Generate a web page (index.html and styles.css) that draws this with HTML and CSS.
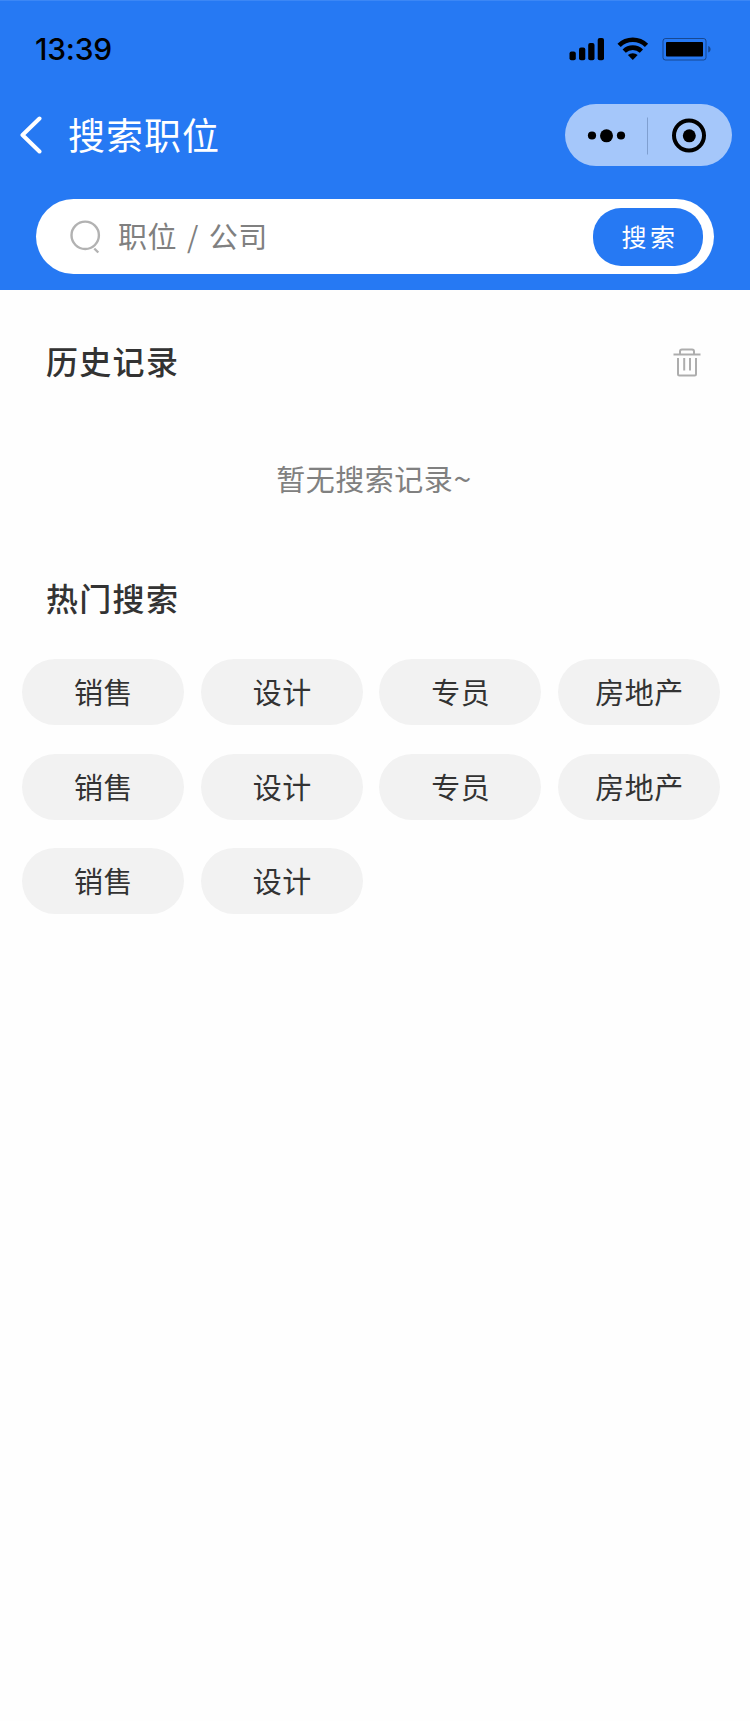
FILE: index.html
```html
<!DOCTYPE html>
<html lang="zh-CN">
<head>
<meta charset="utf-8">
<title>搜索职位</title>
<link rel="stylesheet" href="styles.css">
</head>
<body>
<header class="header">
  <div class="status">
    <span class="time">13:39</span>
    <svg class="status-icons" width="142" height="24" viewBox="0 0 142 24">
      <rect x="-.5" y="14.500" width="6.300" height="8.700" rx="2"/>
      <rect x="9" y="10.500" width="6.300" height="12.700" rx="2"/>
      <rect x="18.200" y="6" width="6.300" height="17.200" rx="2"/>
      <rect x="27.700" y="1" width="6.300" height="22.200" rx="2"/>
      <g fill="none" stroke="#000" stroke-width="4.600">
        <path d="M49.100 8.300a19.500 19.500 0 0 1 27.400 0"/>
        <path d="M54.200 14.100a12.300 12.300 0 0 1 17.200 0"/>
      </g>
      <path d="M62.800 23l-4.900-4.900a7.200 7.200 0 0 1 9.800 0z"/>
      <rect x="93" y="1.500" width="43" height="21.500" rx="2.500" fill="none" stroke="#000" stroke-opacity=".4"/>
      <rect x="96" y="5" width="37" height="14.500" rx="1"/>
      <path d="M138.200 9c3.200.8 3.200 5.700 0 6.500z" fill-opacity=".4"/>
    </svg>
  </div>
  <div class="nav">
    <svg class="back" width="24" height="38" viewBox="0 0 24 38"><path d="M21.500 2.500L4.500 19l17 16.500" fill="none" stroke="#fff" stroke-width="4" stroke-linecap="round" stroke-linejoin="round"/></svg>
    <h1 class="title">搜索职位</h1>
    <div class="capsule">
      <svg width="167" height="62" viewBox="0 0 167 62">
        <circle cx="27" cy="31.500" r="4.100"/><circle cx="41.500" cy="31.800" r="6.500"/><circle cx="56" cy="31.500" r="4.100"/>
        <path d="M82.500 13.500v37" stroke="#7f9fd0"/>
        <circle cx="124" cy="31.500" r="15" fill="none" stroke="#000" stroke-width="4"/><circle cx="124.300" cy="31.800" r="6.500"/>
      </svg>
    </div>
  </div>
  <div class="search">
    <svg class="lens" width="32" height="36" viewBox="0 0 32 36"><g fill="none" stroke="#b2b2b2" stroke-width="2.400"><circle cx="15.200" cy="16.300" r="13.700"/><path d="M24.300 29.500l4 4"/></g></svg>
    <span class="placeholder">职位 / 公司</span>
    <button class="submit">搜索</button>
  </div>
</header>
<main>
  <section class="history">
    <div class="history-head">
      <h2 class="heading">历史记录</h2>
      <svg class="trash" width="28" height="30" viewBox="0 0 28 30"><g fill="none" stroke="#adadad" stroke-width="2"><path d="M7 6V3.500a2 2 0 0 1 2-2h10a2 2 0 0 1 2 2V6M.5 6.500h27M5 10v16a1.500 1.500 0 0 0 1.500 1.500h15a1.500 1.500 0 0 0 1.500-1.500V10M11.200 10v12.500M17 10v12.500"/></g></svg>
    </div>
    <p class="empty">暂无搜索记录<span class="tilde">~</span></p>
  </section>
  <section class="hot">
    <h2 class="heading">热门搜索</h2>
    <div class="chips">
      <span class="chip">销售</span><span class="chip">设计</span><span class="chip">专员</span><span class="chip">房地产</span>
      <span class="chip">销售</span><span class="chip">设计</span><span class="chip">专员</span><span class="chip">房地产</span>
      <span class="chip">销售</span><span class="chip">设计</span>
    </div>
  </section>
</main>
</body>
</html>
```
FILE: styles.css
```css
* { box-sizing: border-box; margin: 0; padding: 0; }
body {
  min-height: 1721px;
  background: #fefefe;
  color: #333;
  font-family: "Noto Sans CJK SC", sans-serif;
}
.header { height: 290px; background: #2679f3; border-top: 1px solid #3c87f5; }
.status {
  display: flex;
  justify-content: space-between;
  height: 103px;
  padding: 28px 38px 0 35px;
}
.time { font: 500 30px/40px Inter, sans-serif; letter-spacing: -0.2px; color: #000; }
.status-icons { margin-top: 8px; overflow: visible; }
.nav { display: flex; height: 62px; align-items: center; padding: 0 18px; }
.title {
  margin-left: 26px;
  padding-bottom: 3px;
  font-size: 37px;
  font-weight: 400;
  line-height: 56px;
  letter-spacing: 1px;
  color: #fff;
}
.capsule { width: 167px; height: 62px; margin-left: auto; border-radius: 31px; background: #a5c7fa; }
.capsule svg { display: block; }
.search {
  display: flex;
  align-items: center;
  width: 678px;
  height: 75px;
  margin: 33px 0 0 36px;
  padding: 0 11px 0 34px;
  border-radius: 38px;
  background: #fff;
}
.placeholder {
  margin-left: 16px;
  font-size: 29px;
  line-height: 71px;
  letter-spacing: 0.500px;
  word-spacing: 3px;
  color: #808080;
  padding-bottom: 3px;
}
.submit {
  width: 110px;
  height: 58px;
  margin-left: auto;
  padding: 0 0 1px 4px;
  border: 0;
  border-radius: 28px;
  background: #2679f3;
  color: #fff;
  font-family: inherit;
  font-size: 25px;
  letter-spacing: 3.500px;
}
.history { height: 269px; padding: 48px 49px 0 46px; }
.history-head { display: flex; justify-content: space-between; height: 48px; }
.heading { font-size: 32px; font-weight: 500; line-height: 45px; letter-spacing: 1.300px; }
.trash { margin-top: 10px; }
.empty {
  margin-top: 70px;
  padding-left: 1px;
  text-align: center;
  font-size: 29px;
  line-height: 44px;
  letter-spacing: 0.500px;
  color: #808080;
}
.tilde { font-size: 32px; line-height: 1; }
.hot { padding: 16px 30px 0 22px; }
.hot .heading { padding-left: 24px; }
.chips {
  display: grid;
  grid-template-columns: repeat(4, 162px);
  justify-content: space-between;
  row-gap: 28.700px;
  margin-top: 39px;
}
.chip {
  height: 66px;
  padding-left: 1px;
  border-radius: 33px;
  background: #f2f2f2;
  text-align: center;
  font-size: 29px;
  line-height: 65px;
  letter-spacing: 0.500px;
}
```
